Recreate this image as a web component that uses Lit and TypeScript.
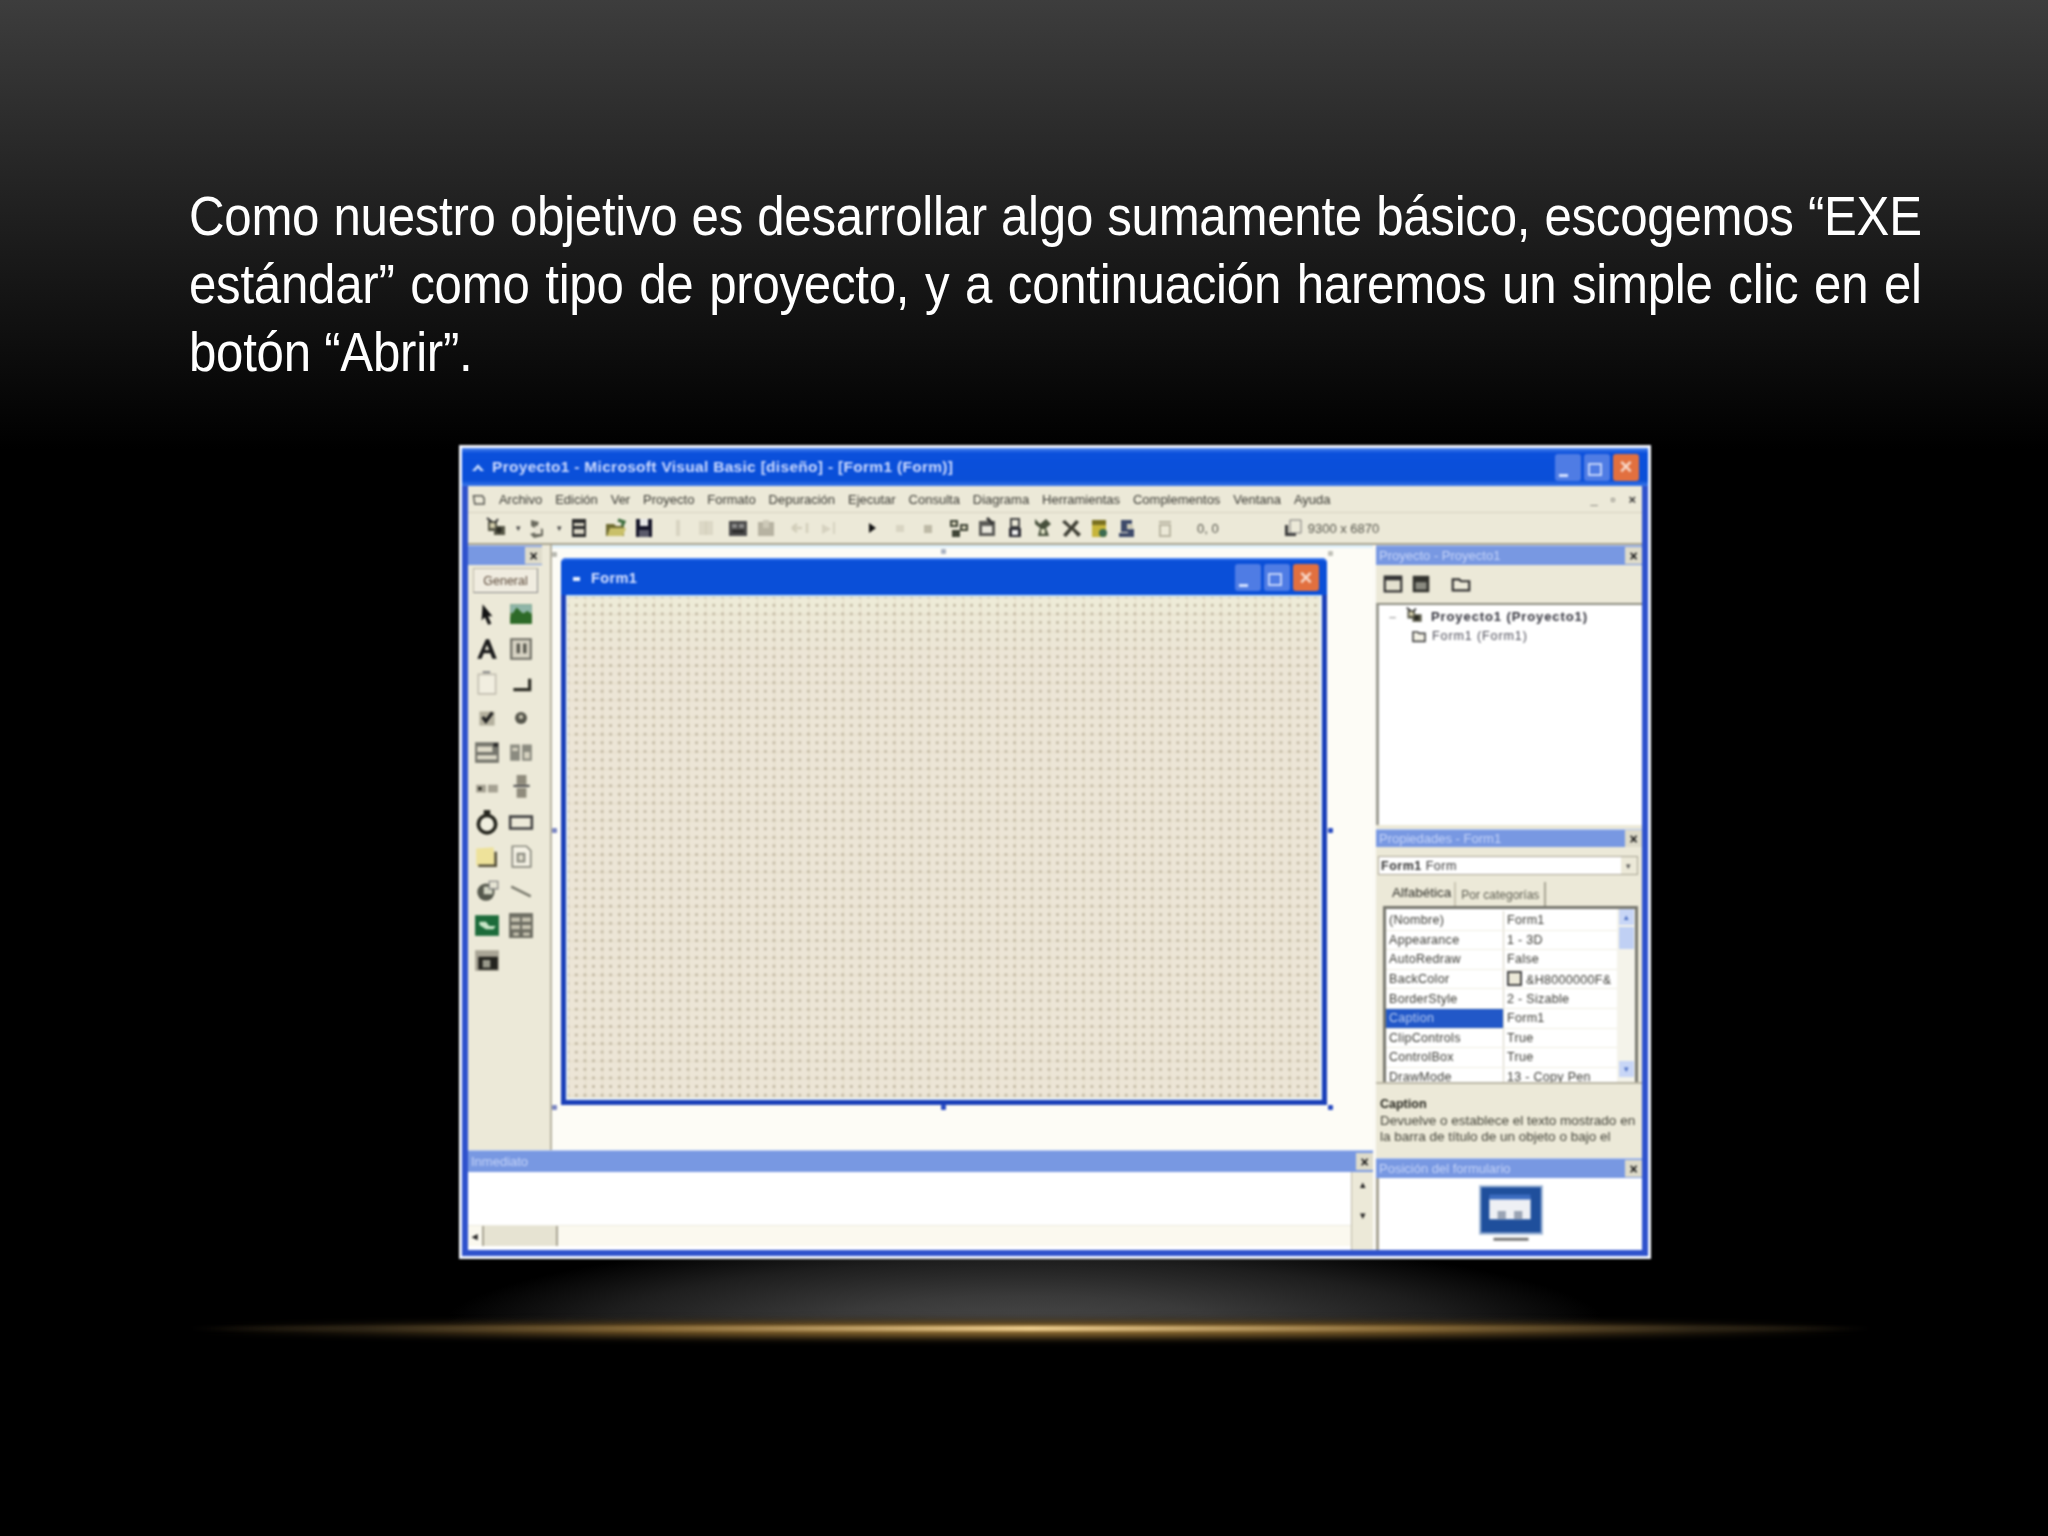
import { LitElement, html, css, svg } from "lit";
import { customElement } from "lit/decorators.js";

const ic = (body: unknown, size = 24) => html`<svg width=${size} height=${size} viewBox="0 0 24 24">${body}</svg>`;

const tb = {
  newp: svg`<path d="M3 5h9v5h8v9H9v-4H3z" fill="#5a5a4a"/><path d="M5 7h5v5H5z" fill="#cfc9a8"/><path d="M2 2l5 4M13 3l-3 4" stroke="#333" stroke-width="2"/><circle cx="14" cy="14" r="3" fill="#2c2c24"/>`,
  form: svg`<path d="M5 4l8 2-2 5 6 2v7l-9 2-4-4 6-2-1-4-4-2z" fill="#6c6c60"/><path d="M9 10h6v8H9z" fill="#e8e4d4"/>`,
  menu: svg`<path d="M5 3h14v18H5z" fill="#2c2c2c"/><path d="M7 7h10v3H7zM7 13h10v5H7z" fill="#d8d4c4"/>`,
  open: svg`<path d="M2 8h8l2 2h8v10H2z" fill="#6e6a30"/><path d="M6 12h16l-3 8H3z" fill="#c9c06a"/><path d="M14 4l6 2-2 4" stroke="#3c6c3c" stroke-width="3" fill="none"/>`,
  save: svg`<path d="M4 3h16v18H4z" fill="#141428"/><path d="M8 3h8v7H8z" fill="#e8e8e8"/><path d="M7 14h10v7H7z" fill="#5a5a6a"/>`,
  dimA: svg`<path d="M10 4h4v16h-4z" fill="#d8d4c2"/>`,
  dimB: svg`<path d="M5 5h14v14H5z" fill="#dcd8c6"/><path d="M12 5v14" stroke="#cfcab6"/>`,
  find: svg`<path d="M3 5h18v15H3z" fill="#4c4c4c"/><path d="M6 8h5v4H6zM13 8h5v4h-5z" fill="#8a8a8a"/><path d="M6 14h12v3H6z" fill="#2c2c2c"/>`,
  find2: svg`<path d="M4 6h16v14H4z" fill="#b7b3a2"/><path d="M9 4h6v8H9z" fill="#cdc9b8"/>`,
  undo: svg`<path d="M4 12h10M4 12l5-4M4 12l5 4M19 7v10" stroke="#d2ceba" stroke-width="2.5" fill="none"/>`,
  redo: svg`<path d="M6 8l9 5-9 5z" fill="#d6d2c0"/><path d="M18 6v12" stroke="#d6d2c0" stroke-width="2"/>`,
  play: svg`<path d="M9 7l7 5-7 5z" fill="#111"/>`,
  pause: svg`<path d="M8 9h8v7H8z" fill="#d8d4c2"/>`,
  stop: svg`<path d="M8 9h8v8H8z" fill="#bdb9a6"/>`,
  proj: svg`<path d="M3 4h8v7H3zM13 8h8v7h-8zM5 14h8v7H5z" fill="#3f4436"/><path d="M5 6h4v3H5zM15 10h4v3h-4z" fill="#dcd9c0"/>`,
  prop: svg`<path d="M4 5h16v15H4z" fill="#5c5c58"/><path d="M7 10h10v7H7z" fill="#e8e6dc"/><path d="M12 2l6 6" stroke="#333" stroke-width="3"/>`,
  lay: svg`<path d="M8 3h8v8H8z" fill="#ece9d8" stroke="#444" stroke-width="2"/><path d="M6 12h12v9H6z" fill="#2c2c34"/><path d="M9 14h6v5H9z" fill="#eee"/>`,
  obj: svg`<path d="M4 3l5 5 6-5 5 5-5 4 3 8H7l2-8-5-4z" fill="#47503c"/><path d="M10 13h4v5h-4z" fill="#d8dcc0"/>`,
  tools: svg`<path d="M3 6l7 6-6 7 3 2 6-7 6 7 3-3-7-6 5-6-3-2-5 6-6-6z" fill="#3e3e34"/>`,
  data: svg`<path d="M5 4h14v17H5z" fill="#c7b53a"/><path d="M5 4h14v5H5z" fill="#7a7020"/><circle cx="16" cy="17" r="4" fill="#3b6a4e"/>`,
  comp: svg`<path d="M6 4h11v4h-5v5h7v8H4v-4h9v-1H6z" fill="#3e4a6a"/><path d="M12 9h6v3h-6z" fill="#c8c4ac"/>`,
  bin: svg`<path d="M6 6h12M7 9h10v11H7z" stroke="#b9b5a2" stroke-width="2" fill="none"/>`,
  size: svg`<path d="M4 20V9h3v8h8v3z" fill="#3c3c3c"/><path d="M9 4h11v13H9z" fill="#ece9d8" stroke="#777"/>`,
};

const tbx = {
  arrow: svg`<path d="M8 3l9 11-4 0 3 7-3 1-3-7-3 3z" fill="#141414"/>`,
  pic: svg`<path d="M2 3h20v18H2z" fill="#4d7b3d"/><path d="M2 3h20v8H2z" fill="#8fb5a8"/><path d="M8 6l6 6 4-3 4 4v8H2v-6z" fill="#2d6a28"/>`,
  a: svg`<path d="M3 21L11 3h3l7 18h-4l-2-5H9l-2 5zM10 13h4l-2-5z" fill="#1c1c1c"/>`,
  ab: svg`<path d="M3 3h18v18H3z" fill="#d8d4c4" stroke="#6e6e64" stroke-width="2"/><path d="M8 7h3v9H8zM14 7h3v9h-3z" fill="#55554c"/>`,
  frame: svg`<path d="M4 4h16v18H4z" fill="#f1eee0" stroke="#c2beb0" stroke-width="1.5"/><path d="M8 2h7" stroke="#888" stroke-width="2"/>`,
  btn: svg`<path d="M20 8v10H5" stroke="#2e2e26" stroke-width="3" fill="none"/>`,
  check: svg`<path d="M5 6h14v13H5z" fill="#b4b09e"/><path d="M8 11l3 4 6-8" stroke="#222" stroke-width="3" fill="none"/>`,
  radio: svg`<circle cx="12" cy="12" r="5.5" fill="#55554b"/><circle cx="12" cy="11" r="2" fill="#c4c0ae"/>`,
  combo: svg`<path d="M1 3h22v19H1z" fill="#75756c"/><path d="M3 7h14v5H3zM3 15h18v4H3z" fill="#dedac8"/><path d="M18 4h4v3h-4z" fill="#222"/>`,
  list: svg`<path d="M2 5h9v15H2zM13 5h9v15h-9z" fill="#8b8b80"/><path d="M4 8h5v3H4zM15 12h5v6h-5z" fill="#d6d2c0"/>`,
  hs: svg`<path d="M2 10h9v7H2zM13 10h9v7h-9z" fill="#a5a192"/><path d="M4 12h3v3H4z" fill="#2c2c24"/>`,
  vs: svg`<path d="M8 1h9v9H8zM8 13h9v9H8z" fill="#8f8b7c"/><path d="M5 11h15" stroke="#555" stroke-width="2"/>`,
  timer: svg`<circle cx="12" cy="14" r="8" fill="#f0eedf" stroke="#26261e" stroke-width="3.4"/><path d="M9 1h6v4H9z" fill="#26261e"/>`,
  shape: svg`<path d="M2 7h20v11H2z" fill="#ece9d8" stroke="#444" stroke-width="2.4"/>`,
  folder: svg`<path d="M2 5l16-1 2 16-18 1z" fill="#eee29a"/><path d="M20 8v13H4" stroke="#55503a" stroke-width="2.4" fill="none"/>`,
  file: svg`<path d="M4 3h13l4 4v15H4z" fill="#f4f1e4" stroke="#8b8b80" stroke-width="1.6"/><path d="M8 9h8v9H8z" fill="#8b8b80"/><path d="M10 11h4v5h-4z" fill="#e0ddcc"/>`,
  sh: svg`<circle cx="11" cy="13" r="8" fill="#55584d"/><path d="M9 8h8v7H9z" fill="#d4d6c4"/><path d="M14 3h8v7h-8z" fill="#e6e4d4" stroke="#777"/>`,
  line: svg`<path d="M3 8l18 9" stroke="#7a7a6e" stroke-width="2.4"/>`,
  img: svg`<path d="M1 3h22v19H1z" fill="#1c6b3a"/><path d="M5 9l6 0 3 4 6 0-2 3-7 0-6-4z" fill="#c8e6c8"/>`,
  grid: svg`<path d="M1 1h22v23H1z" fill="#6d6d62"/><path d="M3 5h8v4H3zM13 5h8v4h-8zM3 12h8v4H3zM13 12h8v4h-8zM5 19h5v3H5zM14 19h6v3h-6z" fill="#c6c2b0"/>`,
  ole: svg`<path d="M1 3h22v19H1z" fill="#a9a596"/><path d="M4 9h18v12H4z" fill="#24241f"/><path d="M8 12h7v7H8z" fill="#9a9a8c"/>`,
};

const toolsOrder = ["arrow","pic","a","ab","frame","btn","check","radio","combo","list","hs","vs","timer","shape","folder","file","sh","line","img","grid","ole"] as const;

const menus = ["Archivo","Edición","Ver","Proyecto","Formato","Depuración","Ejecutar","Consulta","Diagrama","Herramientas","Complementos","Ventana","Ayuda"];

const props: [string,string][] = [
  ["(Nombre)","Form1"],["Appearance","1 - 3D"],["AutoRedraw","False"],["BackColor","&H8000000F&"],
  ["BorderStyle","2 - Sizable"],["Caption","Form1"],["ClipControls","True"],["ControlBox","True"],["DrawMode","13 - Copy Pen"],
];

@customElement("app-root")
export class AppRoot extends LitElement {
  static styles = css`
    :host { display: block; width: 2048px; height: 1536px; font-family: "Liberation Sans", Arial, sans-serif; }
    * { box-sizing: border-box; }
    .slide { position: relative; width: 2048px; height: 1536px; overflow: hidden; background: linear-gradient(180deg, #3d3d3d 0, #151515 290px, #000 450px); display: flex; flex-direction: column; padding-top: 182px; }
    .body { margin: 0 0 0 189px; width: 1936px; height: 263px; color: #fff; font-size: 55px; line-height: 68px; text-align: justify; letter-spacing: -0.3px; transform: scaleX(0.895); transform-origin: 0 0; }
    .shot { margin-left: 459px; width: 1192px; height: 814px; padding: 3px; background: #f4f7ff; filter: blur(0.95px); position: relative; z-index: 2; }
    .win { height: 100%; background: #2f52cc; display: flex; flex-direction: column; padding: 0 6px 6px; border-radius: 5px 5px 0 0; }
    .title { height: 38px; flex: none; display: flex; align-items: center; color: #cfdcff; font-weight: bold; font-size: 15.5px; letter-spacing: 0.3px; background: linear-gradient(180deg, #4d86ee 0, #0b50dc 5px, #0a4fd8 85%, #3d78e8 100%); margin: 0 -6px; padding: 0 9px 0 8px; }
    .title .t { margin-left: 6px; flex: 1; }
    .wbtn { width: 26px; height: 27px; margin-left: 3px; border-radius: 3px; background: #4f7ce4; display: flex; align-items: flex-end; padding: 4px; flex: none; }
    .wbtn i { display: block; width: 9px; height: 3px; background: #d6e2ff; }
    .wbtn.max i { width: 14px; height: 13px; background: none; border: 2px solid #c4d4fa; margin-bottom: 1px; }
    .wbtn.x { background: #e2703f; align-items: center; justify-content: center; padding: 0; color: #f8d8c8; font-size: 22px; font-weight: bold; line-height: 1; }
    .menu { height: 27px; flex: none; background: #ece9d8; display: flex; align-items: center; font-size: 13px; color: #3a3a34; padding: 0 6px 0 3px; gap: 12.9px; border-bottom: 1px solid #d6d2bf; }
    .menu .end { margin-left: auto; display: flex; gap: 13px; align-items: center; font-weight: bold; color: #333; }
    .toolbar { height: 32px; flex: none; background: #ece9d8; display: flex; align-items: center; padding-left: 17px; border-bottom: 2px solid #a8a490; }
    .group { display: flex; align-items: center; flex: none; }
    .group svg { width: 24px; height: 24px; display: block; flex: none; margin-right: 4px; }
    .g1 .drop { width: 11px; font-size: 9px; color: #444; text-align: center; margin: 0 2px 0 0; }
    .g1 svg:nth-of-type(3) { margin-right: 13px; }
    .g2 { margin-left: 3px; padding-left: 3px; }
    .g2 svg:nth-of-type(2) { margin-right: 8px; }
    .g2 svg:nth-of-type(4) { margin-right: 10px; }
    .g3 { margin-left: 16px; }
    .g4 { margin-left: 3px; }
    .g4 svg:nth-of-type(7) { margin-right: 14px; }
    .tbtext { font-size: 13px; color: #55554c; flex: none; }
    .tb-pos { margin-left: 16px; }
    .g5 { margin-left: 62px; }
    .g5 svg { margin-right: 0; }
    .tb-size { margin-left: 3px; }
    .work { flex: 1; min-height: 0; display: grid; grid-template-columns: 905px 1fr; column-gap: 3px; background: #fbfaf5; }
    .left { display: grid; grid-template-rows: 605px 1fr; min-height: 0; }
    .top { display: grid; grid-template-columns: 84px 1fr; min-height: 0; }
    .toolbox { background: #ece9d8; border-right: 2px solid #b7b3a2; display: flex; flex-direction: column; }
    .phead { height: 20px; flex: none; background: #7898e2; color: #c6d4f8; font-size: 13px; display: flex; align-items: center; justify-content: space-between; padding-left: 3px; border-top: 1px solid #b6c8f2; white-space: nowrap; }
    .toolbox .phead { margin-right: 8px; }
    .close { width: 17px; height: 17px; background: #dedbca; color: #111; display: flex; align-items: center; justify-content: center; font-size: 14px; font-weight: bold; line-height: 1; }
    .general { align-self: flex-start; margin: 3px 0 6px 5px; width: 65px; height: 25px; display: flex; align-items: center; justify-content: center; font-size: 12.5px; color: #5c4a3a; background: #f0ece0; border: 1px solid #bdb9a8; border-right-color: #888; border-bottom-color: #888; }
    .tools { display: grid; grid-template-columns: 26px 26px; column-gap: 8px; row-gap: 8.6px; padding-left: 6px; margin-top: 2px; }
    .tools svg { display: block; width: 26px; height: 26px; }
    .mdi { position: relative; background: #fdfcf6; border-top: 3px solid #dff0fb; padding: 10px 0 0 9px; }
    .form { width: 766px; height: 547px; background: #1a3fb8; padding: 0 5px 5px; border-radius: 5px 5px 0 0; display: flex; flex-direction: column; }
    .ftitle { height: 37px; flex: none; margin: 0 -5px; background: #0a4fd8; color: #d8e2ff; font-size: 14.5px; font-weight: bold; display: flex; align-items: center; padding: 0 8px 0 10px; letter-spacing: 0.4px; border-top: 2px solid #3d7af0; border-radius: 5px 5px 0 0; }
    .ftitle .t { flex: 1; margin-left: 8px; }
    .fbody { flex: 1; background-color: #ece5d6; background-image: radial-gradient(circle, #b5ab94 1px, transparent 1.5px), linear-gradient(90deg, #e4dcc8 1px, transparent 1px), linear-gradient(180deg, #e4dcc8 1px, transparent 1px), linear-gradient(180deg, #eeecd8, #ece5d6 60px); background-size: 8.6px 8.6px, 17.2px 17.2px, 17.2px 17.2px, 100% 100%; background-position: 4px 4px, 0 0, 0 0, 0 0; border: 2px solid #e6f0f6; border-top-color: #cfe6f4; }
    .hd { position: absolute; width: 5px; height: 5px; background: #2a4cc2; border-radius: 1px; }
    .h1 { left: 0; top: 4px; background: #b8b8b0; } .h2 { left: 389px; top: 1px; background: #a9b2c2; } .h3 { left: 776px; top: 3px; background: #c0c0b8; }
    .h4 { left: 0; top: 280px; background: #7b86c2; } .h5 { left: 776px; top: 280px; } .h6 { left: 0; top: 557px; background: #7b86c2; } .h7 { left: 389px; top: 557px; } .h8 { left: 776px; top: 557px; }
    .imm { display: flex; flex-direction: column; min-height: 0; }
    .imm .phead { height: 22px; }
    .imm .ibody { flex: 1; display: grid; grid-template-columns: 1fr 22px; background: #fff; }
    .imm .col { display: flex; flex-direction: column; justify-content: flex-end; padding-bottom: 4px; background: #fff; }
    .hscroll { height: 21px; background: #fbf9ef; display: flex; align-items: center; font-size: 11px; border-top: 1px solid #eceade; }
    .hscroll b { width: 14px; text-align: center; color: #222; }
    .thumb { width: 76px; height: 100%; background: #e6e3d2; border-left: 2px solid #a8a494; border-right: 2px solid #a8a494; }
    .vscroll { background: #ece9d8; border-left: 1px solid #bab6a4; display: flex; flex-direction: column; align-items: center; gap: 18px; font-size: 11px; color: #222; padding-top: 6px; }
    .right { display: flex; flex-direction: column; min-height: 0; background: #ece9d8; }
    .ptool { height: 38px; flex: none; display: flex; align-items: center; gap: 6px; padding-left: 6px; }
    .ptool svg { width: 22px; height: 22px; display: block; }
    .ptool svg:last-child { margin-left: 12px; }
    .tree { height: 222px; flex: none; background: #fff; border-left: 3px solid #9c9c92; border-top: 2px solid #8c8c80; font-size: 13px; color: #30303a; padding: 1px 0 0 10px; }
    .tree .row { display: flex; align-items: center; height: 20px; gap: 5px; letter-spacing: 0.9px; white-space: nowrap; }
    .tree .row.sub { padding-left: 22px; color: #4c4c58; font-size: 12.5px; }
    .tree .row.main { font-weight: bold; }
    .tree svg { width: 22px; height: 20px; flex: none; }
    .tree .row.sub svg { width: 16px; height: 16px; }
    .tree .dash { color: #aaa; width: 10px; }
    .phead.p { margin-top: 4px; height: 18px; }
    .combo { height: 19px; margin: 9px 4px 0 2px; background: #fff; border: 1px solid #a8a494; display: flex; align-items: center; justify-content: space-between; font-size: 12.5px; color: #333; padding-left: 2px; letter-spacing: 0.5px; }
    .combo b { font-weight: bold; }
    .combo .arr { width: 16px; height: 100%; background: #ece9d8; display: flex; align-items: center; justify-content: center; font-size: 9px; color: #555; }
    .tabs { height: 28px; display: flex; align-items: flex-end; padding-left: 12px; font-size: 13px; color: #444; margin-top: 3px; flex: none; }
    .tabs span { display: block; padding: 0 5px 4px; }
    .tabs .on { color: #30302a; font-size: 13.5px; padding: 0 3px 6px 4px; }
    .tabs .off { border-left: 2px solid #c9c5b3; border-right: 2px solid #aaa695; font-size: 12px; height: 24px; padding-top: 6px; color: #5c5c50; }
    .pgrid { height: 176px; margin: 0 4px 0 7px; flex: none; background: #fff; border: 3px solid #77776e; border-bottom: 0; overflow: hidden; display: grid; grid-template-columns: 1fr 18px; }
    .rows { font-size: 12.5px; color: #3a3a34; padding-top: 2px; }
    .prow { display: grid; grid-template-columns: 118px 1fr; height: 19.6px; align-items: center; border-bottom: 1px solid #f0eee2; letter-spacing: 0.3px; white-space: nowrap; }
    .prow span { padding-left: 3px; }
    .prow span:first-child { border-right: 1px solid #d6d3c2; height: 100%; display: flex; align-items: center; }
    .prow.sel span:first-child { background: #2258c8; color: #b9ccf2; }
    .swatch { display: inline-block; vertical-align: -2px; width: 15px; height: 15px; border: 2px solid #444; background: #ece9d8; margin-right: 4px; }
    .psb { background: #f4f3ea; display: flex; flex-direction: column; align-items: center; font-size: 9px; color: #4a6ec4; }
    .psb .tmb { width: 15px; height: 22px; background: #c0d0f4; margin-top: 2px; }
    .psb .up, .psb .dn { width: 15px; height: 16px; background: #c8d6f6; text-align: center; line-height: 16px; }
    .psb .dn { margin-top: auto; margin-bottom: 10px; }
    .desc { height: 76px; flex: none; padding: 12px 4px 0 4px; font-size: 13.5px; line-height: 16.5px; color: #44443a; border-top: 2px solid #bab6a4; }
    .desc b { display: block; color: #26261e; font-size: 12.5px; }
    .layhead { flex: none; }
    .lay { flex: 1; background: #fff; border-left: 3px solid #a8a494; display: flex; justify-content: center; padding: 5px 0 0 0; min-height: 0; }
    .lay svg { display: block; width: 68px; height: 60px; }
    .glow { position: absolute; left: 440px; width: 1170px; top: 1259px; height: 70px; background: radial-gradient(ellipse 50% 135% at 50% 100%, #4a4a4a 0, #3a3a3a 35%, #1e1e1e 72%, rgba(0,0,0,0) 100%); }
    .gold { position: absolute; left: 190px; width: 1680px; top: 1318px; height: 23px; background: radial-gradient(ellipse 50% 50% at 50% 50%, #a07c3c 0, #6e5224 50%, #2a2010 80%, rgba(0,0,0,0) 100%); filter: blur(3px); }
    .core { top: 1326px; height: 5px; background: linear-gradient(90deg, rgba(0,0,0,0) 0, #2c2416 10%, #8a6c3a 28%, #f0cf90 50%, #8a6c3a 72%, #2c2416 90%, rgba(0,0,0,0) 100%); filter: blur(1.5px); }
  `;

  private bar(cls: string, keys: (keyof typeof tb)[]) {
    return html`<div class="group ${cls}">${keys.map((k) => ic(tb[k]))}</div>`;
  }

  render() {
    return html`
      <div class="slide">
        <p class="body">Como nuestro objetivo es desarrollar algo sumamente básico, escogemos “EXE estándar” como tipo de proyecto, y a continuación haremos un simple clic en el botón “Abrir”.</p>
        <div class="shot">
          <div class="win">
            <div class="title">
              ${ic(svg`<path d="M3 18L12 8l9 10h-5l-4-5-4 5z" fill="#cfe0ff"/>`, 16)}
              <span class="t">Proyecto1 - Microsoft Visual Basic [diseño] - [Form1 (Form)]</span>
              <div class="wbtn"><i></i></div><div class="wbtn max"><i></i></div><div class="wbtn x">×</div>
            </div>
            <div class="menu">
              ${ic(svg`<path d="M4 6h14l3 4v9H6z" fill="none" stroke="#5a5a54" stroke-width="2.4"/>`, 15)}
              ${menus.map((m) => html`<span>${m}</span>`)}
              <span class="end"><span>_</span><span>▫</span><span>×</span></span>
            </div>
            <div class="toolbar">
              <div class="group g1">
                ${ic(tb.newp)}<span class="drop">▾</span>
                ${ic(tb.form)}<span class="drop">▾</span>
                ${ic(tb.menu)}${ic(tb.open)}${ic(tb.save)}
              </div>
              ${this.bar("g2", ["dimA","dimB","find","find2","undo","redo"])}
              ${this.bar("g3", ["play","pause","stop"])}
              ${this.bar("g4", ["proj","prop","lay","obj","tools","data","comp","bin"])}
              <span class="tbtext tb-pos">0, 0</span>
              <div class="group g5">${ic(tb.size)}</div>
              <span class="tbtext tb-size">9300 x 6870</span>
            </div>
            <div class="work">
              <div class="left">
                <div class="top">
                  <div class="toolbox">
                    <div class="phead"><span></span><span class="close">×</span></div>
                    <div class="general">General</div>
                    <div class="tools">${toolsOrder.map((k) => ic(tbx[k]))}</div>
                  </div>
                  <div class="mdi">
                    <div class="form">
                      <div class="ftitle">
                        ${ic(svg`<path d="M4 10h14v8H4z" fill="#e8f0ff"/>`, 12)}
                        <span class="t">Form1</span>
                        <div class="wbtn"><i></i></div><div class="wbtn max"><i></i></div><div class="wbtn x">×</div>
                      </div>
                      <div class="fbody"></div>
                    </div>
                    ${[1,2,3,4,5,6,7,8].map((n) => html`<span class="hd h${n}"></span>`)}
                  </div>
                </div>
                <div class="imm">
                  <div class="phead"><span>Inmediato</span><span class="close">×</span></div>
                  <div class="ibody">
                    <div class="col"><div class="hscroll"><b>◂</b><div class="thumb"></div></div></div>
                    <div class="vscroll"><span>▴</span><span>▾</span></div>
                  </div>
                </div>
              </div>
              <div class="right">
                <div class="phead"><span>Proyecto - Proyecto1</span><span class="close">×</span></div>
                <div class="ptool">${ic(svg`<path d="M3 4h18v16H3z" fill="#e4e1cf" stroke="#333" stroke-width="2.4"/><path d="M3 4h18v4H3z" fill="#333"/>`)}${ic(svg`<path d="M3 3h18v18H3z" fill="#33332e"/><path d="M6 10h12v8H6z" fill="#8a8a80"/>`)}${ic(svg`<path d="M3 7h7l2 2h9v10H3z" fill="#ece9d8" stroke="#333" stroke-width="2.4"/>`)}</div>
                <div class="tree">
                  <div class="row main"><span class="dash">–</span>${ic(tb.newp)}<span>Proyecto1 (Proyecto1)</span></div>
                  <div class="row sub">${ic(svg`<path d="M3 6h7l2 2h9v12H3z" fill="#f4f2e6" stroke="#444" stroke-width="2.4"/>`)}<span>Form1 (Form1)</span></div>
                </div>
                <div class="phead p"><span>Propiedades - Form1</span><span class="close">×</span></div>
                <div class="combo"><span><b>Form1</b> Form</span><span class="arr">▾</span></div>
                <div class="tabs"><span class="on">Alfabética</span><span class="off">Por categorías</span></div>
                <div class="pgrid">
                  <div class="rows">
                    ${props.map(([k, v], i) => html`<div class="prow ${i === 5 ? "sel" : ""}"><span>${k}</span><span>${i === 3 ? html`<i class="swatch"></i>` : ""}${v}</span></div>`)}
                  </div>
                  <div class="psb"><span class="up">▴</span><span class="tmb"></span><span class="dn">▾</span></div>
                </div>
                <div class="desc"><b>Caption</b>Devuelve o establece el texto mostrado en la barra de título de un objeto o bajo el</div>
                <div class="phead layhead"><span>Posición del formulario</span><span class="close">×</span></div>
                <div class="lay">
                  <svg viewBox="0 0 66 56"><path d="M3 2h60v46H3z" fill="#1f4f9c" stroke="#9fb6d6" stroke-width="2"/><path d="M12 14h40v20H12z" fill="#eef0f4"/><path d="M12 10h40v5H12z" fill="#3c6cc0"/><path d="M20 26h8v8h-8zM36 26h8v8h-8z" fill="#9aa4b4"/><path d="M16 52h34v3H16z" fill="#777"/></svg>
                </div>
              </div>
            </div>
          </div>
        </div>
        <div class="glow"></div>
        <div class="gold"></div>
        <div class="gold core"></div>
      </div>
    `;
  }
}
